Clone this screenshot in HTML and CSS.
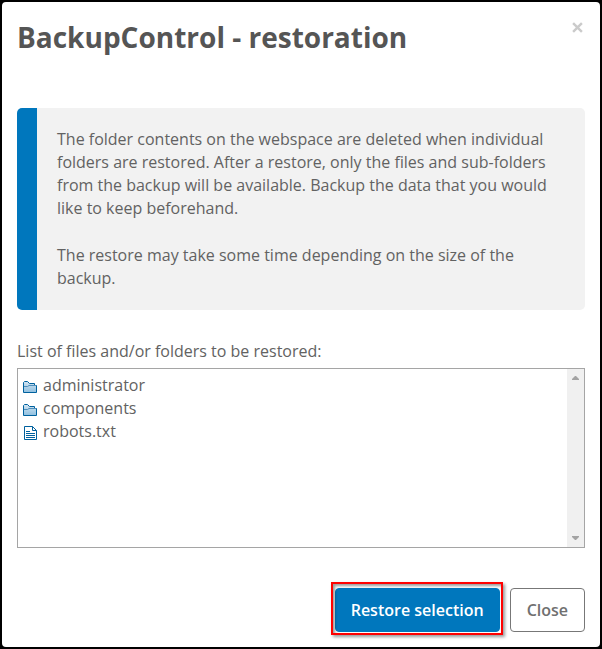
FILE: index.html
```html
<!DOCTYPE html>
<html lang="en">
  <head>
    <meta charset="UTF-8" />
    <meta name="viewport" content="width=device-width, initial-scale=1.0" />
    <title>BackupControl - restoration</title>
    <link rel="stylesheet" href="styles.css">
  </head>
  <body>
    <main class="dialog" role="dialog" aria-labelledby="dialog-title">
      <header class="dialog-header">
        <h1 id="dialog-title">BackupControl - restoration</h1>
        <button class="dismiss" type="button" aria-label="Dismiss">
          <svg width="11" height="11" viewBox="0 0 10 10">
            <path d="M1 1L9 9M9 1L1 9" stroke="#cbcbcb" stroke-width="2.2" />
          </svg>
        </button>
      </header>

      <div class="notice">
        <p>
          The folder contents on the webspace are deleted when individual
          folders are restored. After a restore, only the files and sub-folders
          from the backup will be available. Backup the data that you would
          like to keep beforehand.
        </p>
        <p>
          The restore may take some time depending on the size of the backup.
        </p>
      </div>

      <p class="list-label" id="list-label">
        List of files and/or folders to be restored:
      </p>
      <div class="file-box">
        <ul class="file-list" aria-labelledby="list-label">
          <li>
            <svg class="icon" width="15" height="15" viewBox="0 0 15 15">
              <defs>
                <linearGradient id="folder" x1="0" y1="0" x2="0" y2="1">
                  <stop offset="0" stop-color="#d3e5f2" />
                  <stop offset="1" stop-color="#8fbfdf" />
                </linearGradient>
              </defs>
              <path d="M1.5 12.5V2.5L2.5 1.5H5.5L7.5 3.5H12.5V5.5H14.5V12.5Z" fill="url(#folder)" stroke="#00619e" />
              <path d="M2 6.5H5.5L7 5.5H14" fill="none" stroke="#4d8ebb" />
            </svg>
            administrator
          </li>
          <li>
            <svg class="icon" width="15" height="15" viewBox="0 0 15 15">
              <path d="M1.5 12.5V2.5L2.5 1.5H5.5L7.5 3.5H12.5V5.5H14.5V12.5Z" fill="url(#folder)" stroke="#00619e" />
              <path d="M2 6.5H5.5L7 5.5H14" fill="none" stroke="#4d8ebb" />
            </svg>
            components
          </li>
          <li>
            <svg class="icon" width="15" height="15" viewBox="0 0 15 15">
              <path d="M2.5 0.5H10.5L14.5 4.5V13.5H2.5Z" fill="#fff" stroke="#00619e" />
              <path d="M10.5 0.5V4.5H14.5M4 5.5H8M4 7.5H13M4 9.5H13M4 11.5H13" fill="none" stroke="#00619e" />
            </svg>
            robots.txt
          </li>
        </ul>
        <div class="scroll-track" aria-hidden="true">
          <svg width="7" height="4" viewBox="0 0 7 4">
            <path d="M3 0H4L7 3V4H0V3Z" fill="#a3a3a3" />
          </svg>
          <svg width="7" height="4" viewBox="0 0 7 4">
            <path d="M0 0H7V1L4 4H3L0 1Z" fill="#a3a3a3" />
          </svg>
        </div>
      </div>

      <footer class="actions">
        <button class="btn btn-primary" type="button">Restore selection</button>
        <button class="btn" type="button">Close</button>
      </footer>
    </main>
  </body>
</html>
```

FILE: styles.css
```css
* {
  box-sizing: border-box;
}

body {
  margin: 0;
  background-color: #000;
  color: #626262;
  font-family: "Open Sans", "Liberation Sans", sans-serif;
  font-size: 16px;
  line-height: 23px;
}

.dialog {
  display: flex;
  flex-direction: column;
  min-height: 100vh;
  padding: 15px;
  border: 2px solid #000;
  border-radius: 6px;
  background-color: #fff;
}

.dialog-header {
  display: flex;
  justify-content: space-between;
  align-items: flex-start;
  margin-bottom: 51px;
}

h1 {
  margin: 0;
  color: #555;
  font-size: 28px;
  font-weight: 700;
  line-height: 40px;
}

.dismiss {
  display: flex;
  padding: 5px 2px;
  border: none;
  background: none;
  cursor: pointer;
}

.notice {
  padding: 20px;
  padding-right: 32px;
  border-left: 20px solid #0077bd;
  border-radius: 5px;
  background-color: #f2f2f2;
}

.notice p {
  margin: 0;
}

.notice p + p {
  margin-top: 24px;
}

.list-label {
  margin: 30px 0 5px;
}

.file-box {
  display: flex;
  height: 180px;
  border: 1px solid #a5a5a5;
}

.file-list {
  flex: 1;
  margin: 0;
  padding: 5px 4px;
  list-style: none;
}

.file-list li {
  display: flex;
  align-items: center;
  gap: 6px;
}

.icon {
  margin-top: 4px;
}

.scroll-track {
  display: flex;
  flex-direction: column;
  justify-content: space-between;
  align-items: center;
  width: 17px;
  padding: 7px 0;
  background-color: #f0f0f0;
}

.actions {
  display: flex;
  justify-content: flex-end;
  gap: 10px;
  margin-top: 40px;
}

.btn {
  position: relative;
  height: 44px;
  padding: 0 16px;
  border: 1px solid #777;
  border-radius: 4px;
  background-color: #fff;
  color: #707070;
  font-family: inherit;
  font-size: 16px;
  font-weight: 600;
  cursor: pointer;
}

.btn-primary {
  padding: 0 15px;
  border-color: #0077bd;
  background-color: #0077bd;
  color: #fff;
}

/* highlight frame around the main action */
.btn-primary::after {
  content: "";
  position: absolute;
  top: -7px;
  right: -4px;
  bottom: -4px;
  left: -5px;
  border: 2px solid #f00;
  box-shadow: 2px 2px 3px rgba(0, 0, 0, 0.4),
    inset 2px 2px 3px rgba(0, 0, 0, 0.4);
}
```
